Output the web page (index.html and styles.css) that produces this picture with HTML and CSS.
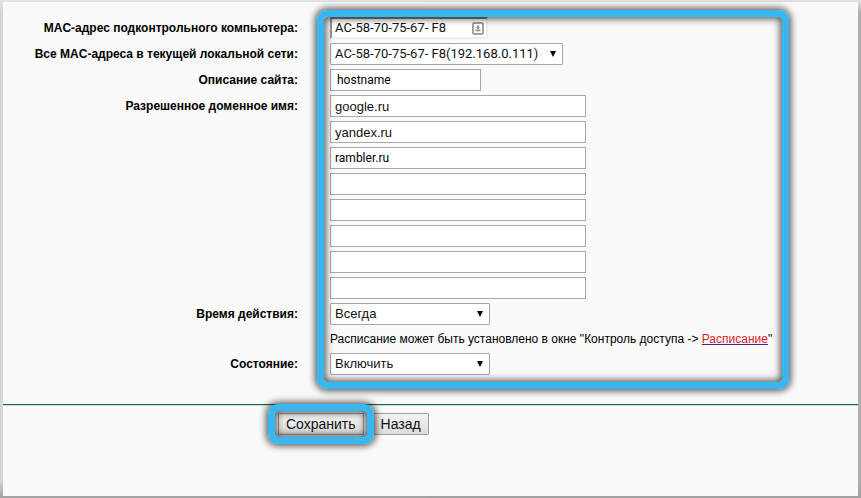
FILE: index.html
```html
<!DOCTYPE html>
<html lang="ru">
<head>
<meta charset="utf-8">
<title>Родительский контроль</title>
<link rel="stylesheet" href="styles.css">
</head>
<body>
<form class="panel">
  <div class="fields">
    <label class="label" for="mac">MAC-адрес подконтрольного компьютера:</label>
    <div class="mac-box">
      <input class="mac-input" id="mac" type="text" value="AC-58-70-75-67- F8">
      <svg class="mac-icon" viewBox="0 0 12 13" aria-hidden="true">
        <rect x="1" y="1" width="10" height="11" rx="1" fill="#fff" stroke="#858585" stroke-width="1.5"/>
        <path d="M6 3L8 5.8H4z" fill="#8c8c8c"/>
        <path d="M5 5.5h2v1.5H5zM3.5 7.5h5v1.8h-5z" fill="#8c8c8c"/>
      </svg>
    </div>

    <label class="label" for="all-macs">Все MAC-адреса в текущей локальной сети:</label>
    <div class="select wide">
      <select id="all-macs"><option>AC-58-70-75-67- F8(192.168.0.111)</option></select>
    </div>

    <label class="label" for="site">Описание сайта:</label>
    <input class="text site narrow-face" id="site" type="text" value="hostname">

    <label class="label" for="domain1">Разрешенное доменное имя:</label>
    <div class="domains">
      <input class="text" id="domain1" type="text" value="google.ru">
      <input class="text" type="text" aria-label="Доменное имя 2" value="yandex.ru">
      <input class="text narrow-face" type="text" aria-label="Доменное имя 3" value="rambler.ru">
      <input class="text" type="text" aria-label="Доменное имя 4">
      <input class="text" type="text" aria-label="Доменное имя 5">
      <input class="text" type="text" aria-label="Доменное имя 6">
      <input class="text" type="text" aria-label="Доменное имя 7">
      <input class="text" type="text" aria-label="Доменное имя 8">
    </div>

    <label class="label" for="time">Время действия:</label>
    <div class="select">
      <select id="time"><option>Всегда</option></select>
    </div>
    <p class="note">Расписание может быть установлено в окне "Контроль доступа -&gt; <a href="#schedule">Расписание</a>"</p>

    <label class="label" for="state">Состояние:</label>
    <div class="select">
      <select id="state"><option>Включить</option></select>
    </div>
    <div class="frame frame-fields"></div>
  </div>
  <div class="actions">
    <div class="save">
      <button class="button" type="submit">Сохранить</button>
      <div class="frame frame-save"></div>
    </div>
    <button class="button" type="button">Назад</button>
  </div>
</form>
</body>
</html>
```

FILE: styles.css
```css
* {
  box-sizing: border-box;
}

body {
  margin: 0;
  padding: 2px 3px;
  min-height: 100vh;
  display: flex;
  background: linear-gradient(#e4e4e4, transparent 12px), linear-gradient(transparent 480px, #a0a0a0), linear-gradient(90deg, #d6d6d6 50%, #b0b0b0 50%);
  font-family: "Liberation Sans", Arial, sans-serif;
  font-size: 12px;
  color: #000;
}

.panel {
  flex: 1;
  background: #fafafa;
}

.fields {
  position: relative;
  display: grid;
  grid-template-columns: 295px max-content;
  column-gap: 32px;
  row-gap: 4px;
  padding-top: 15px;
  justify-items: start;
}

.label {
  justify-self: end;
  line-height: 22px;
  font-weight: bold;
}

.mac-box {
  display: flex;
  align-items: center;
  width: 158px;
  height: 22px;
  padding-right: 2px;
  border: 2px solid #eee;
  border-top-color: #858585;
  border-left-color: #959595;
  background: #fff;
}

.mac-input {
  flex: 1;
  min-width: 0;
  padding: 0 0 0 3px;
  border: 0;
  background: none;
  font: 13px/18px Roboto, "Liberation Sans", sans-serif;
  color: #111;
}

.mac-icon {
  width: 12px;
  height: 13px;
}

.text {
  width: 256px;
  height: 22px;
  padding: 0 4px;
  border: 1px solid #a9a9a9;
  background: #fff;
  font: 13px/20px "Liberation Sans", Arial, sans-serif;
  color: #111;
}

.site {
  width: 151px;
  padding-left: 6px;
}

.narrow-face {
  font-family: Roboto, "Liberation Sans", sans-serif;
  font-size: 12px;
  color: #000;
}

.domains {
  display: flex;
  flex-direction: column;
  gap: 4px;
}

.select {
  position: relative;
  width: 160px;
  height: 22px;
}

.select::after {
  content: "";
  position: absolute;
  top: 8px;
  right: 7px;
  border: solid transparent;
  border-width: 6px 3px 0;
  border-top-color: #000;
  pointer-events: none;
}

.select select {
  width: 100%;
  height: 22px;
  padding: 0 4px;
  appearance: none;
  border: 1px solid #a6a6a6;
  border-radius: 1px;
  background: #fff;
  font: 13px/20px "Liberation Sans", Arial, sans-serif;
  color: #111;
}

.wide {
  width: 233px;
}

.wide select {
  font-family: Roboto, "Liberation Sans", sans-serif;
}

.note {
  grid-column: 2;
  margin: 0;
  line-height: 20px;
}

.note a {
  color: #e01b24;
  text-decoration-color: #551a8b;
}

.frame {
  position: absolute;
  border: 7px solid #38b6ef;
  border-radius: 10px;
  box-shadow: 0 0 7px 2px rgba(0, 0, 0, 0.65), inset 0 0 7px 2px rgba(0, 0, 0, 0.65);
  pointer-events: none;
}

.frame-fields {
  grid-column: 2 / 3;
  inset: 8px -17px -14px -13px;
}

.actions {
  display: flex;
  gap: 9px;
  margin-top: 29px;
  padding: 8px 0 0 275px;
  border-top: 1px solid #1f6347;
  box-shadow: inset 0 1px #c0e6d1;
}

.save {
  position: relative;
}

.frame-save {
  inset: -9px -10px;
}

.button {
  height: 22px;
  padding: 0 7px;
  border: 1px solid #a0a0a0;
  border-radius: 1px;
  background: linear-gradient(#f4f4f4, #dcdcdc);
  font: 14px/20px "Liberation Sans", Arial, sans-serif;
  color: #111;
}
```
